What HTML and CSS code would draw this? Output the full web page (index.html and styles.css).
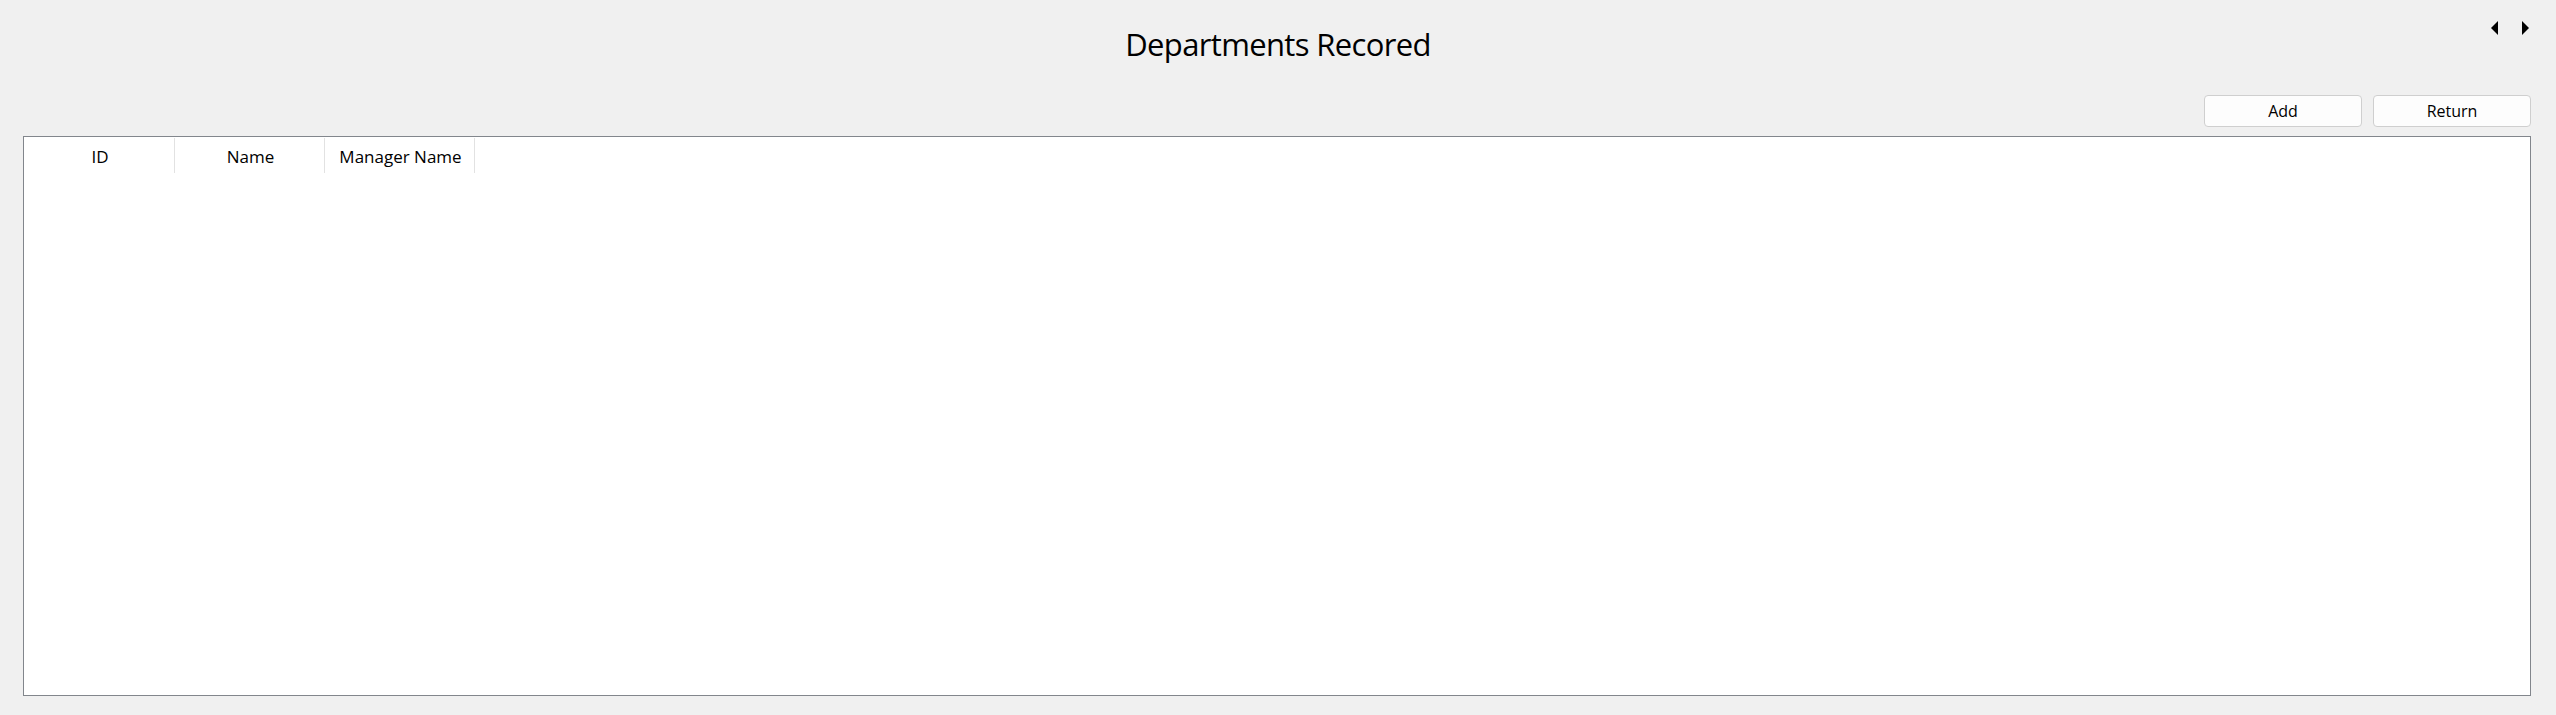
FILE: index.html
```html
<!DOCTYPE html>
<html>
<head>
<meta charset="utf-8">
<link rel="stylesheet" href="styles.css">
</head>
<body>
<div class="window">
  <div class="scroller">
    <svg width="8" height="14" viewBox="0 0 8 14"><polygon points="7,0 7,14 0,7" fill="#000"/></svg>
    <svg width="8" height="14" viewBox="0 0 8 14"><polygon points="1,0 1,14 8,7" fill="#000"/></svg>
  </div>
  <h1 class="title">Departments Recored</h1>
  <div class="actions">
    <button class="btn">Add</button>
    <button class="btn">Return</button>
  </div>
  <div class="table">
    <div class="header">
      <div class="col">ID</div>
      <div class="col">Name</div>
      <div class="col">Manager Name</div>
    </div>
  </div>
</div>
</body>
</html>
```
FILE: styles.css
```css
html, body {
  margin: 0;
  padding: 0;
  background: #f0f0f0;
}
body {
  font-family: "Open Sans", "Noto Sans", sans-serif;
  color: #000;
}
.window {
  position: relative;
  height: 715px;
  box-sizing: border-box;
  padding: 24px 25px 19px 23px;
  display: flex;
  flex-direction: column;
}
.scroller {
  position: absolute;
  top: 21px;
  right: 27px;
  display: flex;
  gap: 22px;
}
.scroller svg { display: block; }
.title {
  margin: 0;
  font-weight: 400;
  font-size: 31px;
  letter-spacing: -0.65px;
  line-height: 40px;
  text-align: center;
  padding-left: 2px;
}
.actions {
  display: flex;
  justify-content: flex-end;
  gap: 11px;
  margin-top: 31px;
  margin-bottom: 9px;
}
.btn {
  width: 158px;
  height: 32px;
  background: #fdfdfd;
  border: 1px solid #cfcfcf;
  border-radius: 4px;
  font-family: "Open Sans", "Noto Sans", sans-serif;
  font-size: 16px;
  color: #000;
  padding: 0;
}
.table {
  flex: 1;
  background: #fff;
  border: 1px solid #82868c;
}
.header {
  display: flex;
  height: 35px;
  margin-top: 1px;
}
.col {
  width: 150px;
  border-right: 1px solid #e2e2e2;
  display: flex;
  align-items: center;
  justify-content: center;
  font-size: 17px;
  line-height: 35px;
  padding: 2px 0 0 2px;
  box-sizing: border-box;
}
.col:first-child { width: 151px; }
```
